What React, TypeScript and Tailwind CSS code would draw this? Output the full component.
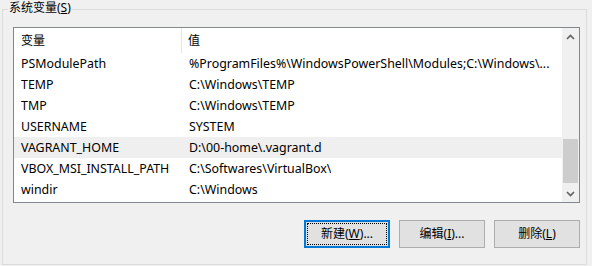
import React from "react";

const rows: [string, string][] = [
  ["PSModulePath", "%ProgramFiles%\\WindowsPowerShell\\Modules;C:\\Windows\\..."],
  ["TEMP", "C:\\Windows\\TEMP"],
  ["TMP", "C:\\Windows\\TEMP"],
  ["USERNAME", "SYSTEM"],
  ["VAGRANT_HOME", "D:\\00-home\\.vagrant.d"],
  ["VBOX_MSI_INSTALL_PATH", "C:\\Softwares\\VirtualBox\\"],
  ["windir", "C:\\Windows"],
];

const font = { fontFamily: '"Noto Sans", "Noto Sans CJK SC", sans-serif' };

function Btn({ label, u, rest, focused }: { label: string; u: string; rest: string; focused?: boolean }) {
  return (
    <div
      className={
        "w-[86px] h-[28px] bg-[#e1e1e1] flex items-center justify-center text-[12px] text-black " +
        (focused ? "border-2 border-[#0078d7] p-[1px]" : "border border-[#adadad]")
      }
    >
      {focused ? (
        <div className="w-full h-full border border-dotted border-black flex items-center justify-center">
          <span>
            {label}(<span className="underline">{u}</span>){rest}
          </span>
        </div>
      ) : (
        <span>
          {label}(<span className="underline">{u}</span>){rest}
        </span>
      )}
    </div>
  );
}

export default function App() {
  return (
    <div className="w-[592px] h-[266px] bg-[#f0f0f0] relative overflow-hidden" style={font}>
      <div className="ml-[2px] pt-[9px]">
        <div className="relative w-[585px] h-[256px] border border-[#dcdcdc] pl-[10px] pt-[17px]">
          <div className="absolute left-[5px] top-[-10px] bg-[#f0f0f0] px-[1px] text-[12px] leading-[16px] text-black">
            系统变量(<span className="underline">S</span>)
          </div>
          <div className="w-[567px] h-[176px] border border-[#828790] bg-white flex">
            <div className="w-[548px] flex flex-col">
              <div className="h-[25px] flex text-[12px] text-black">
                <div className="w-[168px] pl-[7px] flex items-center border-r border-[#e5e5e5]">变量</div>
                <div className="pl-[6px] flex items-center">值</div>
              </div>
              {rows.map(([k, v]) => (
                <div
                  key={k}
                  className={
                    "h-[21px] pt-[1px] flex items-center text-[12.4px] text-black " +
                    (k === "VAGRANT_HOME" ? "bg-[#efefef]" : "")
                  }
                >
                  <div className="w-[168px] pl-[7px] whitespace-nowrap">{k}</div>
                  <div className="pl-[7px] whitespace-nowrap overflow-hidden">{v}</div>
                </div>
              ))}
            </div>
            <div className="w-[17px] bg-[#f0f0f0] flex flex-col items-center">
              <div className="h-[17px] w-full flex items-center justify-center">
                <svg width="9" height="6" viewBox="0 0 9 6">
                  <path d="M1 5 L4.5 1.5 L8 5" stroke="#606060" strokeWidth="1.6" fill="none" />
                </svg>
              </div>
              <div className="h-[94px]" />
              <div className="w-[15px] h-[44px] bg-[#cdcdcd]" />
              <div className="flex-1" />
              <div className="h-[17px] w-full flex items-center justify-center">
                <svg width="9" height="6" viewBox="0 0 9 6">
                  <path d="M1 1 L4.5 4.5 L8 1" stroke="#606060" strokeWidth="1.6" fill="none" />
                </svg>
              </div>
            </div>
          </div>
          <div className="flex gap-[9px] mt-[17px] ml-[291px]">
            <Btn label="新建" u="W" rest="..." focused />
            <Btn label="编辑" u="I" rest="..." />
            <Btn label="删除" u="L" rest="" />
          </div>
        </div>
      </div>
    </div>
  );
}
